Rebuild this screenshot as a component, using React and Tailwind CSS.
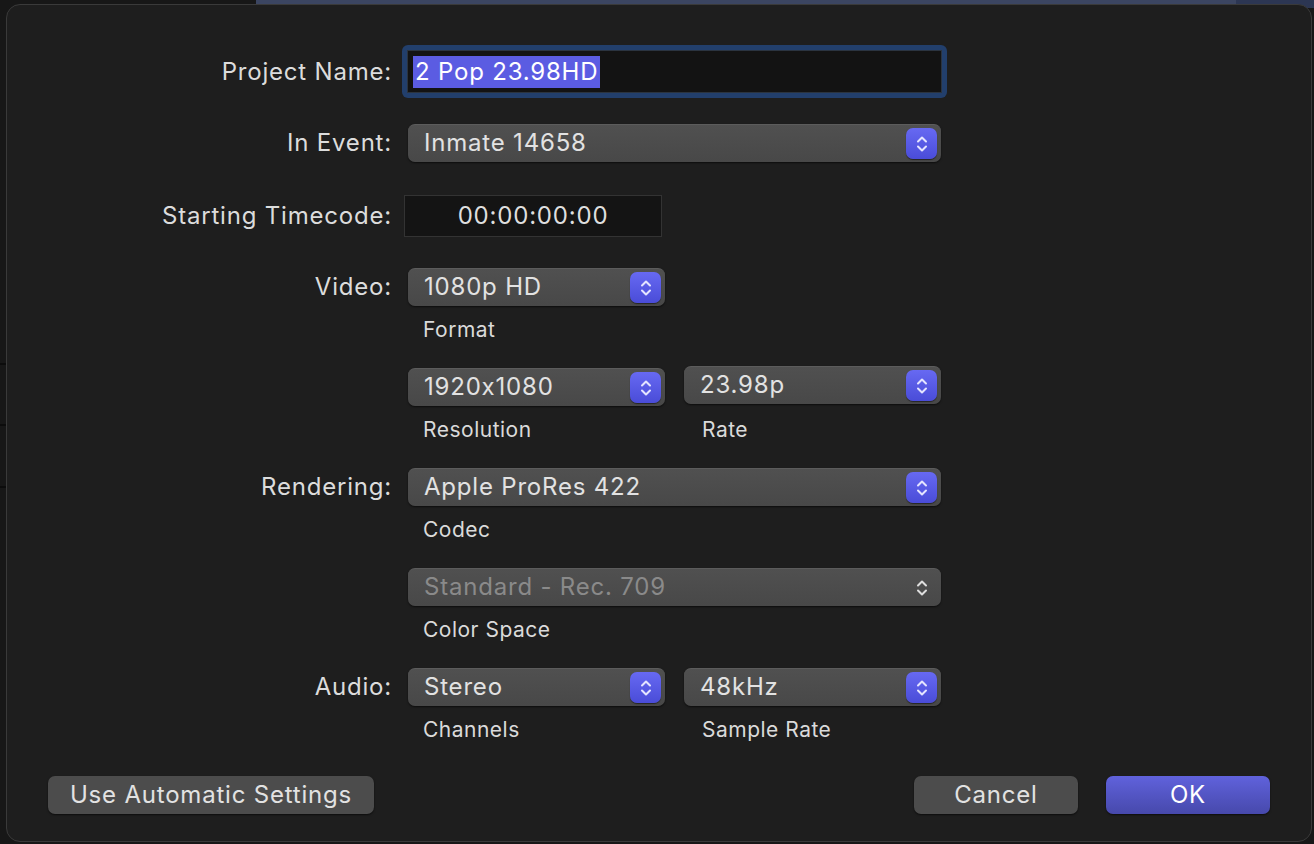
import React from "react";

const font = { fontFamily: "Inter, 'Noto Sans', sans-serif" };

function Chevrons({ color = "#e4e4ff" }) {
  return (
    <svg width="12" height="20" viewBox="0 0 12 20" fill="none">
      <path d="M2 7.5 L6 3.5 L10 7.5" stroke={color} strokeWidth="2" strokeLinecap="round" strokeLinejoin="round" />
      <path d="M2 12.5 L6 16.5 L10 12.5" stroke={color} strokeWidth="2" strokeLinecap="round" strokeLinejoin="round" />
    </svg>
  );
}

function Popup({ value, wide, disabled, className = "" }) {
  return (
    <div
      className={`flex items-center h-[38px] ${wide ? "w-[533px]" : "w-[257px]"} rounded-[7px] bg-gradient-to-b from-[#505050] to-[#484848] border-t border-[#5c5c5c] shadow-[0_1px_2px_rgba(0,0,0,0.6)] pl-[16px] pr-[4px] ${className}`}
    >
      <span className={`flex-1 text-[24px] tracking-[0.8px] leading-none -mt-[2px] ${disabled ? "text-[#8a8a8a]" : "text-[#e2e2e2]"}`}>{value}</span>
      {disabled ? (
        <div className="w-[31px] h-[31px] flex items-center justify-center">
          <Chevrons color="#dedede" />
        </div>
      ) : (
        <div className="w-[31px] h-[31px] rounded-[7px] bg-gradient-to-b from-[#6769f2] to-[#4a4cd8] flex items-center justify-center shadow-[0_1px_1px_rgba(0,0,0,0.5)]">
          <Chevrons />
        </div>
      )}
    </div>
  );
}

function SubLabel({ children, className = "pl-[15px]" }) {
  return (
    <div className={`h-[24px] mt-[12px] text-[21px] tracking-[0.5px] leading-[24px] text-[#dadada] ${className}`}>
      {children}
    </div>
  );
}

function Label({ children }) {
  return <div className="w-[385px] shrink-0 text-right text-[24px] tracking-[0.8px] text-[#dcdcdc]">{children}</div>;
}

export default function App() {
  return (
    <div className="relative w-full h-[844px] bg-[#171717] overflow-hidden [font-feature-settings:'calt'_0]" style={font}>
      <div className="absolute top-0 left-[256px] w-[980px] h-[8px] bg-[#3b4561]" />
      <div className="absolute top-0 left-[1236px] w-[80px] h-[8px] bg-[#2c3653]" />
      <div className="absolute left-0 top-[363px] w-[8px] h-[2px] bg-[#0c0c0c]" />
      <div className="absolute left-0 top-[424px] w-[8px] h-[2px] bg-[#0c0c0c]" />
      <div className="absolute left-0 top-[486px] w-[8px] h-[2px] bg-[#0c0c0c]" />

      <div className="absolute left-[6px] top-[4px] w-[1306px] h-[838px] rounded-[14px] border border-[#3a3a3a] bg-[#1e1e1e] flex flex-col pt-[40px]">
        {/* Project name */}
        <div className="flex items-center h-[53px]">
          <Label>Project Name:</Label>
          <div className="ml-[10px] w-[545px] h-[53px] rounded-[6px] bg-[#223f6c] p-[5px]">
            <div className="w-full h-full bg-[#131313] border border-[#2b3440] flex items-center pl-[5px]">
              <span className="bg-[#5b5ce2] text-white text-[24px] tracking-[0.8px] leading-[32px] px-[2px]">2 Pop 23.98HD</span>
            </div>
          </div>
        </div>

        {/* In event */}
        <div className="flex items-center mt-[26px]">
          <Label>In Event:</Label>
          <div className="ml-[16px]">
            <Popup value="Inmate 14658" wide />
          </div>
        </div>

        {/* Timecode */}
        <div className="flex items-center mt-[33px]">
          <Label>Starting Timecode:</Label>
          <div className="ml-[12px] w-[258px] h-[42px] bg-[#141414] border border-[#333333] flex items-center justify-center text-[24px] tracking-[0.8px] text-[#dedede]">
            00:00:00:00
          </div>
        </div>

        {/* Video */}
        <div className="flex mt-[31px]">
          <div className="h-[38px] flex items-center">
            <Label>Video:</Label>
          </div>
          <div className="ml-[16px] flex flex-col">
            <Popup value="1080p HD" />
            <SubLabel>Format</SubLabel>
            <div className="flex gap-[19px] mt-[26px] items-start">
              <div className="flex flex-col">
                <Popup value="1920x1080" />
                <SubLabel>Resolution</SubLabel>
              </div>
              <div className="flex flex-col -mt-[2px]">
                <Popup value="23.98p" />
                <SubLabel className="mt-[14px] pl-[18px]">Rate</SubLabel>
              </div>
            </div>
          </div>
        </div>

        {/* Rendering */}
        <div className="flex mt-[26px]">
          <div className="h-[38px] flex items-center">
            <Label>Rendering:</Label>
          </div>
          <div className="ml-[16px] flex flex-col">
            <Popup value="Apple ProRes 422" wide />
            <SubLabel>Codec</SubLabel>
            <Popup value="Standard - Rec. 709" wide disabled className="mt-[26px]" />
            <SubLabel>Color Space</SubLabel>
          </div>
        </div>

        {/* Audio */}
        <div className="flex mt-[26px]">
          <div className="h-[38px] flex items-center">
            <Label>Audio:</Label>
          </div>
          <div className="ml-[16px] flex gap-[19px]">
            <div className="flex flex-col">
              <Popup value="Stereo" />
              <SubLabel>Channels</SubLabel>
            </div>
            <div className="flex flex-col">
              <Popup value="48kHz" />
              <SubLabel className="pl-[18px]">Sample Rate</SubLabel>
            </div>
          </div>
        </div>

        {/* Buttons */}
        <div className="flex items-center mt-[34px] px-[41px]">
          <button className="h-[38px] w-[326px] rounded-[7px] bg-[#4c4c4c] text-[24px] tracking-[0.8px] text-[#e2e2e2] shadow-[0_1px_2px_rgba(0,0,0,0.6)]">
            Use Automatic Settings
          </button>
          <div className="flex-1" />
          <button className="h-[38px] w-[164px] rounded-[7px] bg-[#4c4c4c] text-[24px] tracking-[0.8px] text-[#e2e2e2] shadow-[0_1px_2px_rgba(0,0,0,0.6)]">
            Cancel
          </button>
          <button className="ml-[28px] h-[38px] w-[164px] rounded-[7px] bg-gradient-to-b from-[#6062dc] to-[#4749ac] text-[24px] tracking-[0.8px] text-white shadow-[0_1px_2px_rgba(0,0,0,0.6)]">
            OK
          </button>
        </div>
      </div>
    </div>
  );
}
